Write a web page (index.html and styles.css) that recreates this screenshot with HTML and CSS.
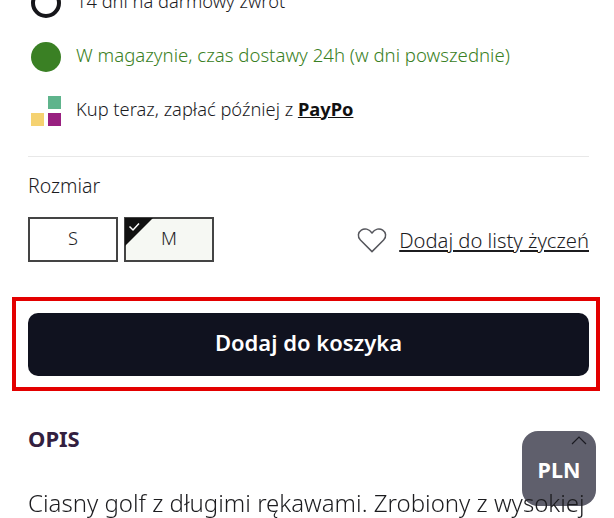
FILE: index.html
```html
<!DOCTYPE html>
<html lang="pl">
<head>
    <meta charset="UTF-8">
    <meta name="viewport" content="width=device-width, initial-scale=1.0">
    <title>Ciasny golf</title>
    <link rel="stylesheet" href="styles.css">
</head>
<body>
    <div class="page">
        <!-- Info rows -->
        <ul class="info">
            <li class="info-row">
                <span class="ring"></span>
                <span class="info-text">14 dni na darmowy zwrot</span>
            </li>
            <li class="info-row stock">
                <span class="dot"></span>
                <span class="info-text">W magazynie, czas dostawy 24h (w dni powszednie)</span>
            </li>
            <li class="info-row">
                <span class="paypo-icon">
                    <i class="sq sq-green"></i>
                    <i class="sq sq-yellow"></i>
                    <i class="sq sq-purple"></i>
                </span>
                <span class="info-text">Kup teraz, zapłać później z <a class="paypo-link" href="#">PayPo</a></span>
            </li>
        </ul>

        <hr class="divider">

        <!-- Size picker -->
        <div class="size-label">Rozmiar</div>
        <div class="size-row">
            <button class="size">S</button>
            <button class="size selected">
                <svg class="tick" width="28" height="28" viewBox="0 0 28 28">
                    <path d="M0 0H28L0 28Z" fill="#111"/>
                    <path d="M4.500 8.500L8 12L14 5.500" fill="none" stroke="#fff" stroke-width="1.500"/>
                </svg>
                M
            </button>
            <a class="wishlist" href="#">
                <svg width="30" height="26" viewBox="0 0 32 28">
                    <path d="M16 26.500L3.500 14C0 10.500 1 5.500 4.500 3.300C8 1 12.800 1.800 16 6.500C19.200 1.800 24 1 27.500 3.300C31 5.500 32 10.500 28.500 14Z" fill="none" stroke="#55565c" stroke-width="1.600" stroke-linejoin="round"/>
                </svg>
                <span class="wishlist-text">Dodaj do listy życzeń</span>
            </a>
        </div>

        <!-- Add to cart -->
        <div class="cart-box">
            <button class="cart-btn">Dodaj do koszyka</button>
        </div>

        <h2 class="desc-title">OPIS</h2>
        <p class="desc">Ciasny golf z długimi rękawami. Zrobiony z wysokiej</p>
    </div>

    <!-- Currency widget -->
    <div class="currency">
        <svg class="chevron" width="16" height="9" viewBox="0 0 16 9">
            <path d="M1 8L8 1L15 8" fill="none" stroke="#1b1b22" stroke-width="1.200"/>
        </svg>
        <span>PLN</span>
    </div>
</body>
</html>
```

FILE: styles.css
```css
/* General Reset */
* {
    margin: 0;
    padding: 0;
    box-sizing: border-box;
}

html, body {
    height: 100%;
    overflow: hidden;
}

body {
    font-family: 'Noto Sans', 'Open Sans', sans-serif;
    font-size: 18.300px;
    font-weight: 300;
    background-color: #fff;
    color: #1c1c1f;
}

.page {
    margin-top: -12px;
    padding: 0 25px 0 28px;
}

/* Info rows */
.info {
    list-style: none;
    padding-left: 3px;
}

.info-row {
    display: flex;
    align-items: center;
    gap: 15px;
    height: 30px;
    margin-bottom: 24px;
}

.info-text {
    padding-bottom: 6px;
}

.stock {
    font-size: 18.600px;
    color: #3a8024;
}

.ring {
    width: 30px;
    height: 30px;
    border: 4px solid #16161a;
    border-radius: 50%;
}

.dot {
    width: 30px;
    height: 30px;
    background-color: #3a8024;
    border-radius: 50%;
}

.paypo-icon {
    display: grid;
    grid-template-columns: 13px 13px;
    grid-template-rows: 13px 13px;
    gap: 4px;
    width: 30px;
    padding-bottom: 1px;
}

.sq {
    display: block;
}

.sq-green {
    grid-column: 2;
    grid-row: 1;
    background-color: #5fb48c;
}

.sq-yellow {
    grid-column: 1;
    grid-row: 2;
    background-color: #f5d271;
}

.sq-purple {
    grid-column: 2;
    grid-row: 2;
    background-color: #992080;
}

.paypo-link {
    color: #111;
    font-weight: 700;
}

.divider {
    border: none;
    border-top: 1px solid #e8e8e8;
    margin-top: 30px;
}

/* Size picker */
.size-label {
    margin-top: 17px;
    font-size: 19.500px;
    line-height: 24px;
}

.size-row {
    display: flex;
    align-items: center;
    margin-top: 19px;
    gap: 6px;
}

.size {
    position: relative;
    width: 90px;
    height: 45px;
    padding-bottom: 4px;
    background-color: #fff;
    border: 2px solid #444;
    font-family: inherit;
    font-size: 18.300px;
    font-weight: 300;
    color: #1c1c1f;
}

.selected {
    background-color: #f6f8f3;
}

.tick {
    position: absolute;
    top: -1px;
    left: -1px;
}

.wishlist {
    display: flex;
    align-items: center;
    gap: 12px;
    margin-left: auto;
    font-size: 20.200px;
    color: #1c1c1f;
    text-decoration: none;
}

.wishlist-text {
    text-decoration: underline;
}

/* Add to cart */
.cart-box {
    margin: 35px -11px 0 -16px;
    padding: 12px 7px 11px 12px;
    border: 4px solid #e30000;
}

.cart-btn {
    display: block;
    width: 100%;
    height: 63px;
    padding-bottom: 6px;
    background-color: #10121f;
    color: #fff;
    border: none;
    border-radius: 10px;
    font-family: inherit;
    font-size: 22px;
    font-weight: 600;
}

/* Description */
.desc-title {
    margin-top: 34px;
    font-size: 22px;
    line-height: 26px;
    font-weight: 700;
    color: #33203f;
}

.desc {
    position: relative;
    z-index: 1;
    margin-top: 39px;
    font-size: 24px;
    line-height: 26px;
    white-space: nowrap;
}

/* Currency widget */
.currency {
    position: fixed;
    top: 431px;
    left: 522px;
    width: 74px;
    height: 75px;
    border-radius: 16px;
    background-color: #5f5f6c;
    color: #fff;
    font-size: 21.500px;
    font-weight: 700;
    display: flex;
    align-items: center;
    justify-content: center;
    padding-top: 1px;
}

.chevron {
    position: absolute;
    top: 5px;
    right: 9px;
}
```
